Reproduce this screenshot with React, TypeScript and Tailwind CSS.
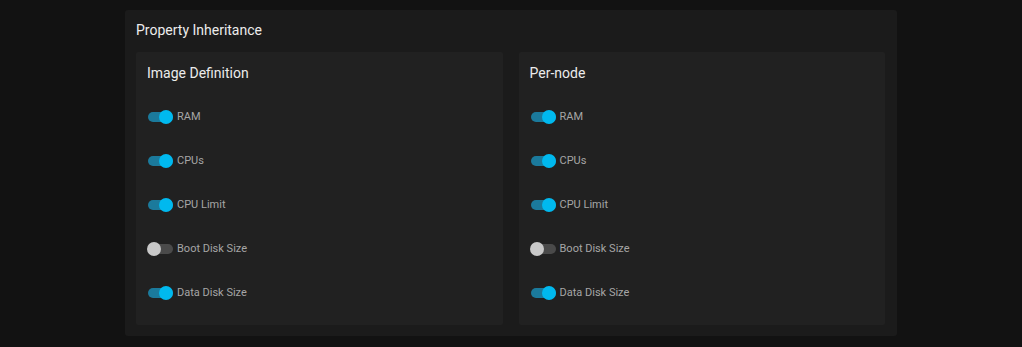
const sections = [
  {
    title: 'Image Definition',
    items: [
      { label: 'RAM', on: true },
      { label: 'CPUs', on: true },
      { label: 'CPU Limit', on: true },
      { label: 'Boot Disk Size', on: false },
      { label: 'Data Disk Size', on: true },
    ],
  },
  {
    title: 'Per-node',
    items: [
      { label: 'RAM', on: true },
      { label: 'CPUs', on: true },
      { label: 'CPU Limit', on: true },
      { label: 'Boot Disk Size', on: false },
      { label: 'Data Disk Size', on: true },
    ],
  },
];

const Toggle: React.FC<{ on: boolean }> = ({ on }) => (
  <span className="relative inline-flex h-[14px] w-[26px] items-center">
    <span
      className={
        on
          ? 'ml-[1px] h-[10px] w-[25px] rounded-full bg-[#1b7a9c]'
          : 'ml-[1px] h-[10px] w-[25px] rounded-full bg-[#4a4a4a]'
      }
    />
    <span
      className={
        on
          ? 'absolute right-0 top-0 h-[14px] w-[14px] rounded-full bg-[#00b9ef]'
          : 'absolute left-0 top-0 h-[14px] w-[14px] rounded-full bg-[#c9c9c9]'
      }
    />
  </span>
);

export default function App() {
  return (
    <div className="min-h-[347px] bg-[#121212] pt-[10px] font-['Roboto',sans-serif]">
      <div className="mx-auto w-[772px] rounded-[3px] bg-[#1b1b1b] pb-[11px] pl-[11px] pr-3 pt-[10px]">
        <h1 className="h-[20px] text-[14px] leading-[20px] text-[#ececec]">Property Inheritance</h1>
        <div className="mt-3 grid grid-cols-2 gap-4">
          {sections.map((section) => (
            <div key={section.title} className="rounded-[2px] bg-[#212121] pb-[10px] pl-[11px] pr-[10px] pt-[11px]">
              <h2 className="h-[20px] text-[14px] leading-[20px] text-[#ececec]">{section.title}</h2>
              <div className="mt-[12px] flex flex-col">
                {section.items.map((item) => (
                  <div key={item.label} className="flex h-[44px] items-center gap-[4px]">
                    <Toggle on={item.on} />
                    <span className="text-[11px] text-[#a6a6a6]">{item.label}</span>
                  </div>
                ))}
              </div>
            </div>
          ))}
        </div>
      </div>
    </div>
  );
}
